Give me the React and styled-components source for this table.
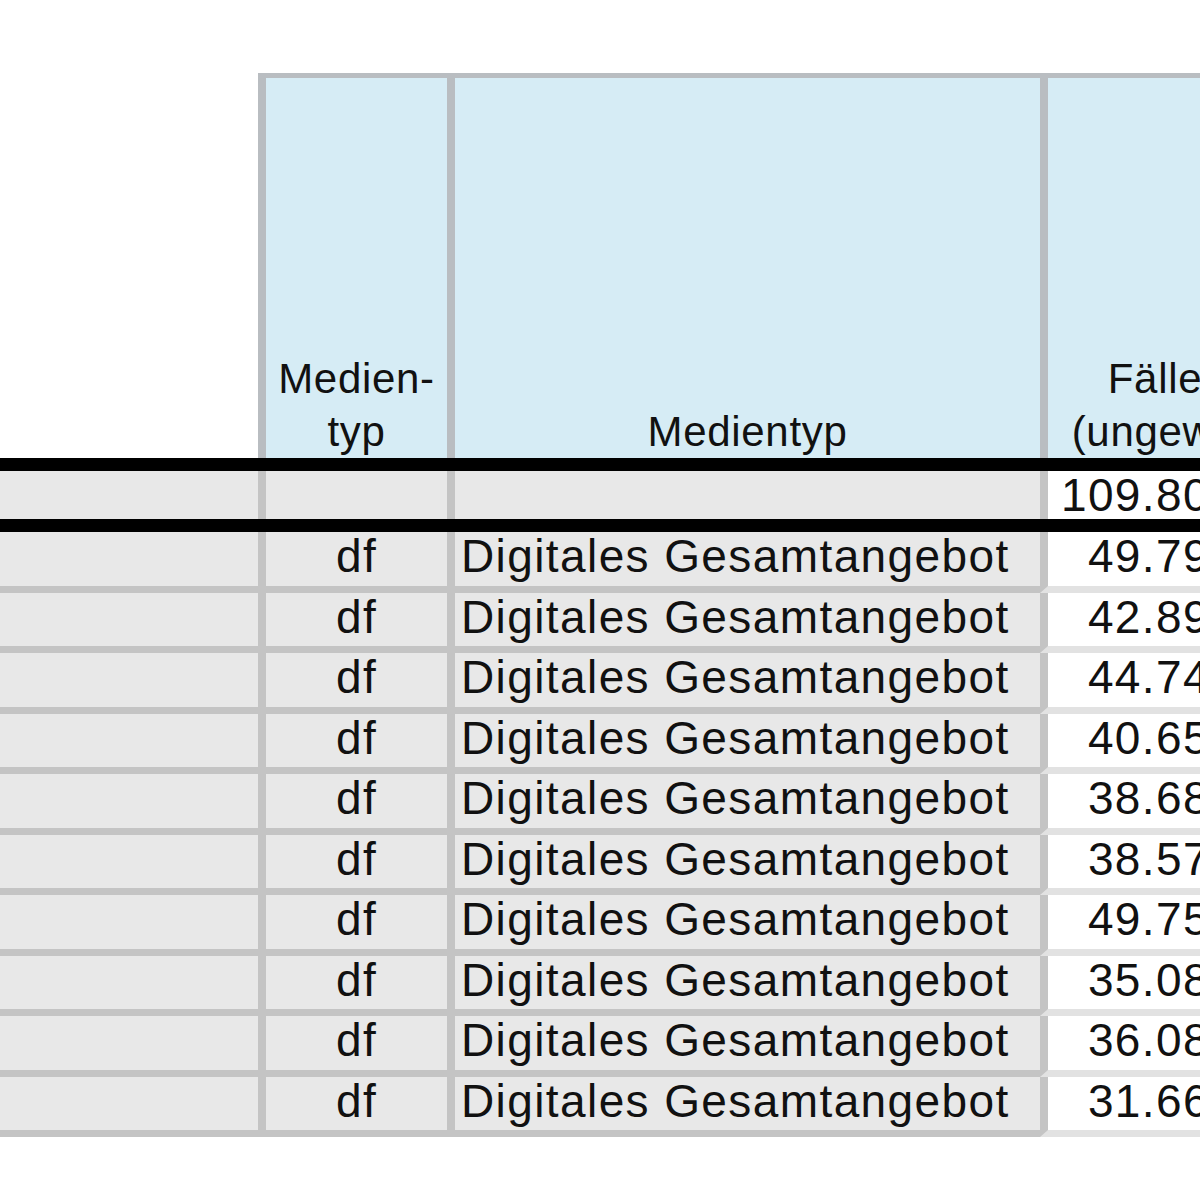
import React from 'react'
import styled, { createGlobalStyle } from 'styled-components'

/*
|--------------------------------------------------------------------------
| Sheet constants
|--------------------------------------------------------------------------
*/

const LEAD_WIDTH = 258
const COLS = {
  kurz: 181,
  typ: 585,
  faelle: 214,
}

const BLUE = '#d6ecf5'
const GRAY = '#e8e8e8'
const LINE = '#c4c4c4'
const HEAD_LINE = '#b9bdc1'

const rows = [
  '49.795',
  '42.893',
  '44.742',
  '40.651',
  '38.688',
  '38.574',
  '49.756',
  '35.083',
  '36.087',
  '31.662',
]

const GlobalStyle = createGlobalStyle`
  body {
    margin: 0;
    background: #ffffff;
    overflow: hidden;
    font-family: "Liberation Sans", Arial, sans-serif;
    color: #111111;
  }
`

/*
|--------------------------------------------------------------------------
| Layout
|--------------------------------------------------------------------------
*/

const Sheet = styled.div`
  padding-top: 73px;
  width: max-content;
`

const Row = styled.div`
  display: flex;
`

const Rule = styled.div`
  height: 13px;
  background: #000000;
`

/*
|--------------------------------------------------------------------------
| Header
|--------------------------------------------------------------------------
*/

const LeadHead = styled.div`
  width: ${LEAD_WIDTH}px;
  background: #ffffff;
`

const HeadCell = styled.div`
  width: ${({ $w }) => $w}px;
  height: 380px;
  border-top: 5px solid ${HEAD_LINE};
  border-left: ${({ $edge }) => $edge || 8}px solid ${HEAD_LINE};
  background: ${BLUE};
  display: flex;
  align-items: flex-end;
  justify-content: center;
  text-align: center;
  font-size: 42px;
  line-height: 53px;
  letter-spacing: 0.7px;
`

/*
|--------------------------------------------------------------------------
| Body cells
|--------------------------------------------------------------------------
*/

const LeadCell = styled.div`
  width: ${LEAD_WIDTH}px;
  height: ${({ $h }) => $h}px;
  background: ${GRAY};
  border-bottom: ${({ $line }) => ($line ? `7px solid ${LINE}` : 'none')};
`

const Cell = styled.div`
  width: ${({ $w }) => $w}px;
  height: ${({ $h }) => $h}px;
  border-left: ${({ $edge }) => $edge || 8}px solid ${LINE};
  border-bottom: ${({ $line, $white }) =>
    $line ? `7px solid ${$white ? '#e2e2e2' : LINE}` : 'none'};
  background: ${({ $white }) => ($white ? '#ffffff' : GRAY)};
  text-align: ${({ $align }) => $align || 'left'};
  padding: ${({ $pad }) => $pad || '0'};
  box-sizing: content-box;
  font-size: 46px;
  line-height: 48px;
  letter-spacing: 1.4px;
  white-space: nowrap;
`

const BodyRow = ({ h, line, kurz, typ, zahl }) => (
  <Row>
    <LeadCell $h={h} $line={line} />
    <Cell $w={COLS.kurz} $h={h} $line={line} $align="center">
      {kurz}
    </Cell>
    <Cell $w={COLS.typ - 6} $h={h} $line={line} $pad="0 0 0 6px">
      {typ}
    </Cell>
    <Cell
      $w={COLS.faelle - 25}
      $h={h}
      $line={line}
      $white
      $align="right"
      $pad="0 25px 0 0"
    >
      {zahl}
    </Cell>
  </Row>
)

/*
|--------------------------------------------------------------------------
| Default Export
|--------------------------------------------------------------------------
*/

export default function App() {
  return (
    <>
      <GlobalStyle />
      <Sheet>
        <Row>
          <LeadHead />
          <HeadCell $w={COLS.kurz}>
            Medien-
            <br />
            typ
          </HeadCell>
          <HeadCell $w={COLS.typ}>Medientyp</HeadCell>
          <HeadCell $w={COLS.faelle}>
            Fälle
            <br />
            (ungew.)
          </HeadCell>
        </Row>
        <Rule />
        <BodyRow h={48} kurz="" typ="" zahl="109.806" />
        <Rule />
        {rows.map((zahl, i) => (
          <BodyRow
            key={i}
            h={53.5}
            line
            kurz="df"
            typ="Digitales Gesamtangebot"
            zahl={zahl}
          />
        ))}
      </Sheet>
    </>
  )
}
